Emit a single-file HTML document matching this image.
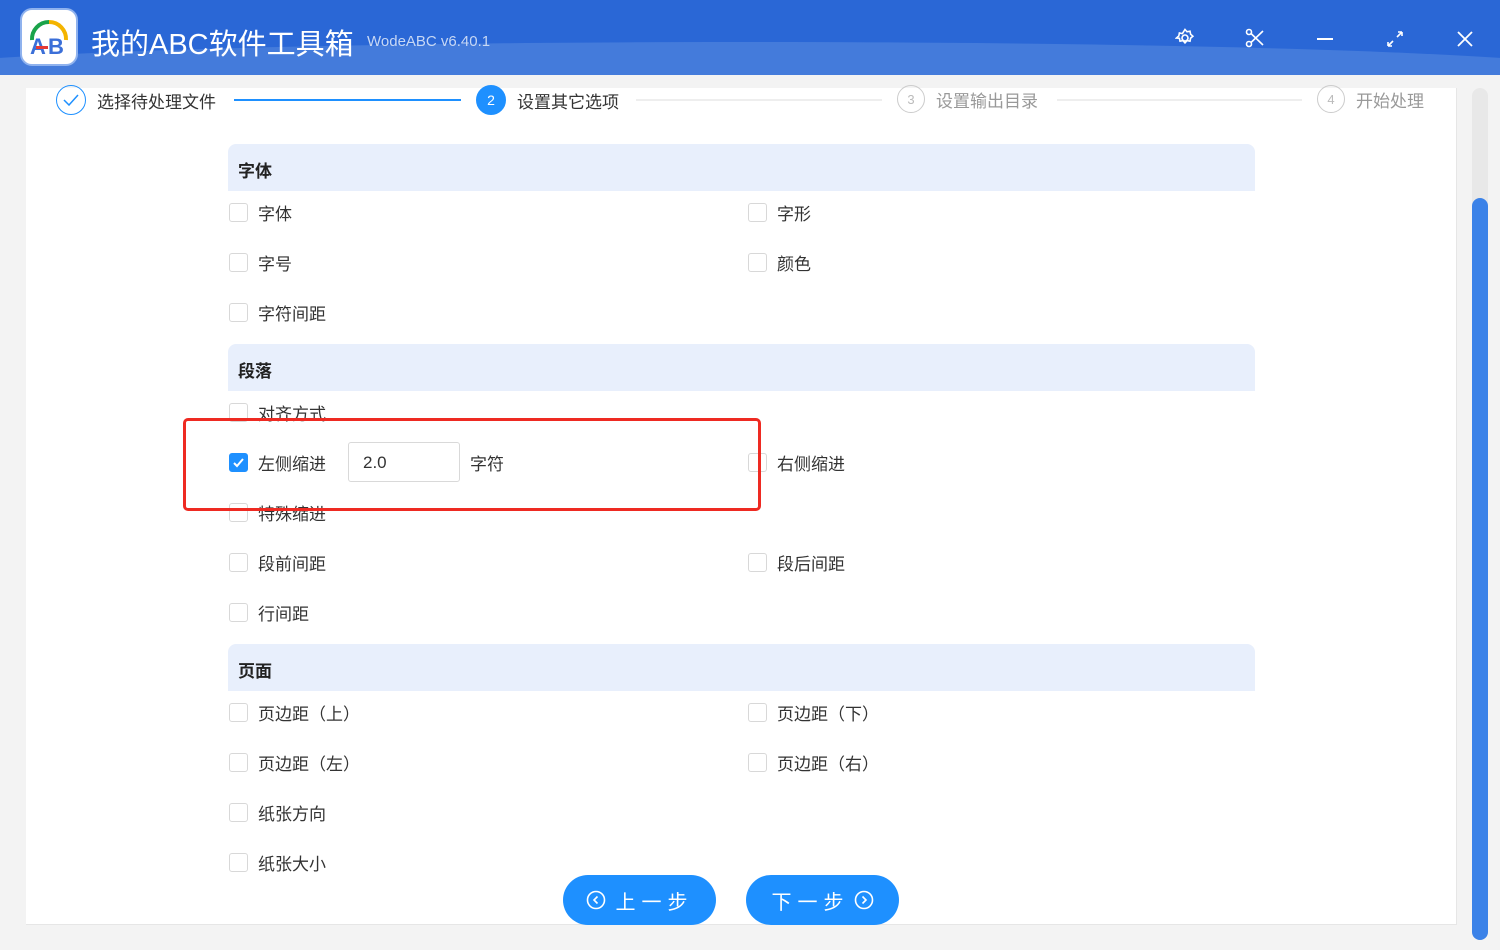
<!DOCTYPE html>
<html><head><meta charset="utf-8"><style>
*{margin:0;padding:0;box-sizing:border-box}
body{width:1500px;height:950px;overflow:hidden;background:#f3f3f3;font-family:"Liberation Sans","Noto Sans CJK SC",sans-serif;position:relative;color:#333}
.hdr{position:absolute;left:0;top:0;width:1500px;height:75px;background:#2a67d6;overflow:hidden}
.wave{position:absolute;left:-100px;top:42px;width:1700px;height:120px;background:#447bdb;border-radius:50% 50% 0 0/30px 30px 0 0}
.logo{position:absolute;left:20px;top:8px;width:58px;height:58px;background:#fff;border-radius:12px;border:2px solid #8fb2ee}
.title{position:absolute;left:91px;top:21px;color:#fff;font-size:29px}
.ver{position:absolute;left:367px;top:33px;color:#c8d8f4;font-size:15px}
.ic{position:absolute;top:28px;color:#fff}
.card{position:absolute;left:26px;top:88px;width:1431px;height:837px;background:#fff;border-right:1px solid #e6e6e6;border-bottom:1px solid #e6e6e6}
.step{position:absolute;top:85px;font-size:17px;color:#333;display:flex;align-items:center}
.circ{width:28px;height:28px;border-radius:50%;border:1px solid #ccc;color:#bbb;font-size:13px;display:flex;align-items:center;justify-content:center;margin-right:11px}
.line{position:absolute;top:99px;height:2px;background:#eee}
.sec{position:absolute;left:228px;width:1027px;height:47px;background:#e8effc;border-radius:8px 8px 0 0;font-weight:bold;font-size:17px;padding:13px 10px;color:#222}
.cb{position:absolute;font-size:17px;display:flex;align-items:center;color:#333;margin-top:-1px}
.cb i{display:inline-block;width:19px;height:19px;border:1px solid #d8d8d8;border-radius:3px;margin-right:10px;background:#fff}
.btn{position:absolute;top:875px;width:153px;height:50px;border-radius:25px;background:#1e90ff;color:#fff;font-size:20px;display:flex;align-items:center;justify-content:center;letter-spacing:6px}
</style></head><body>
<div class="hdr"><div class="wave"></div>
<div class="logo"><svg width="54" height="54" viewBox="0 0 54 54"><path d="M10 30 A17 17 0 0 1 27 12" stroke="#1aa34a" stroke-width="4" fill="none"/><path d="M27 12 A17 17 0 0 1 44 30" stroke="#f4b400" stroke-width="4" fill="none"/><text x="8" y="44" font-size="22" font-family="Liberation Sans" fill="#3b6fd8" font-weight="bold">A</text><text x="26" y="44" font-size="22" font-family="Liberation Sans" fill="#3b6fd8" font-weight="bold">B</text><rect x="14" y="36" width="12" height="3" fill="#e53935"/></svg></div>
<div class="title">我的ABC软件工具箱</div><div class="ver">WodeABC v6.40.1</div>
<svg class="ic" style="left:1175px" width="20" height="20" viewBox="0 0 20 20"><circle cx="10" cy="10" r="3" stroke="#fff" stroke-width="1.6" fill="none"/><path d="M10 1.5l2 2.3 3-.6.6 3 2.3 2-2.3 2-.6 3-3-.6-2 2.3-2-2.3-3 .6-.6-3L1.5 10l2.3-2 .6-3 3 .6z" stroke="#fff" stroke-width="1.6" fill="none"/></svg>
<svg class="ic" style="left:1245px" width="20" height="20" viewBox="0 0 20 20"><circle cx="4" cy="4" r="2.5" stroke="#fff" stroke-width="1.6" fill="none"/><circle cx="4" cy="16" r="2.5" stroke="#fff" stroke-width="1.6" fill="none"/><path d="M6 5.5L18 17M6 14.5L18 3" stroke="#fff" stroke-width="1.6"/></svg>
<div class="ic" style="left:1317px;top:38px;width:16px;height:2px;background:#fff"></div>
<svg class="ic" style="left:1386px;top:30px" width="18" height="18" viewBox="0 0 18 18"><path d="M2 16L7 11M11 7L16 2M16 2h-4M16 2v4M2 16h4M2 16v-4" stroke="#fff" stroke-width="1.6" fill="none"/></svg>
<svg class="ic" style="left:1457px;top:31px" width="16" height="16" viewBox="0 0 16 16"><path d="M1 1L15 15M15 1L1 15" stroke="#fff" stroke-width="1.8"/></svg>
</div>
<div class="card"></div>
<div style="position:absolute;left:1472px;top:88px;width:16px;height:852px;background:#e8e8e8;border-radius:8px"></div>
<div style="position:absolute;left:1472px;top:198px;width:16px;height:742px;background:#3b82e8;border-radius:8px"></div>
<div class="step" style="left:56px"><span class="circ" style="border-color:#1e90ff;color:#1e90ff;width:30px;height:30px"><svg width="16" height="12" viewBox="0 0 16 12"><path d="M1 6l5 5 9-10" stroke="#1e90ff" stroke-width="1.5" fill="none"/></svg></span>选择待处理文件</div>
<div class="line" style="left:234px;width:227px;background:#1e90ff"></div>
<div class="step" style="left:476px"><span class="circ" style="background:#1e90ff;border-color:#1e90ff;color:#fff;width:30px;height:30px;font-size:14px">2</span>设置其它选项</div>
<div class="line" style="left:636px;width:246px"></div>
<div class="step" style="left:897px;color:#999"><span class="circ">3</span>设置输出目录</div>
<div class="line" style="left:1057px;width:245px"></div>
<div class="step" style="left:1317px;color:#999"><span class="circ">4</span>开始处理</div>

<div class="sec" style="top:144px">字体</div>
<div class="cb" style="left:229px;top:201px"><i></i>字体</div>
<div class="cb" style="left:748px;top:201px"><i></i>字形</div>
<div class="cb" style="left:229px;top:251px"><i></i>字号</div>
<div class="cb" style="left:748px;top:251px"><i></i>颜色</div>
<div class="cb" style="left:229px;top:301px"><i></i>字符间距</div>
<div class="sec" style="top:344px">段落</div>
<div class="cb" style="left:229px;top:401px"><i></i>对齐方式</div>
<div class="cb" style="left:229px;top:451px"><i style="background:#1e90ff;border-color:#1e90ff;position:relative"><svg width="17" height="17" viewBox="0 0 17 17" style="position:absolute;left:0;top:0"><path d="M4 9l3 3 6-7" stroke="#fff" stroke-width="2" fill="none"/></svg></i>左侧缩进</div>
<div style="position:absolute;left:348px;top:442px;width:112px;height:40px;border:1px solid #d9d9d9;border-radius:3px;font-size:17px;padding:10px 14px">2.0</div>
<div class="cb" style="left:470px;top:451px">字符</div>
<div class="cb" style="left:748px;top:451px"><i></i>右侧缩进</div>
<div class="cb" style="left:229px;top:501px"><i></i>特殊缩进</div>
<div class="cb" style="left:229px;top:551px"><i></i>段前间距</div>
<div class="cb" style="left:748px;top:551px"><i></i>段后间距</div>
<div class="cb" style="left:229px;top:601px"><i></i>行间距</div>
<div class="sec" style="top:644px">页面</div>
<div class="cb" style="left:229px;top:701px"><i></i>页边距（上）</div>
<div class="cb" style="left:748px;top:701px"><i></i>页边距（下）</div>
<div class="cb" style="left:229px;top:751px"><i></i>页边距（左）</div>
<div class="cb" style="left:748px;top:751px"><i></i>页边距（右）</div>
<div class="cb" style="left:229px;top:801px"><i></i>纸张方向</div>
<div class="cb" style="left:229px;top:851px"><i></i>纸张大小</div>
<div style="position:absolute;left:183px;top:418px;width:578px;height:93px;border:3px solid #ee2a22;border-radius:5px"></div>
<div class="btn" style="left:563px"><svg width="20" height="20" viewBox="0 0 20 20" style="margin-right:10px"><circle cx="10" cy="10" r="8.5" stroke="#fff" stroke-width="1.6" fill="none"/><path d="M11.5 6.5L8 10l3.5 3.5" stroke="#fff" stroke-width="1.6" fill="none"/></svg>上一步</div>
<div class="btn" style="left:746px">下一步<svg width="20" height="20" viewBox="0 0 20 20" style="margin-left:4px"><circle cx="10" cy="10" r="8.5" stroke="#fff" stroke-width="1.6" fill="none"/><path d="M8.5 6.5L12 10l-3.5 3.5" stroke="#fff" stroke-width="1.6" fill="none"/></svg></div>
</body></html>
